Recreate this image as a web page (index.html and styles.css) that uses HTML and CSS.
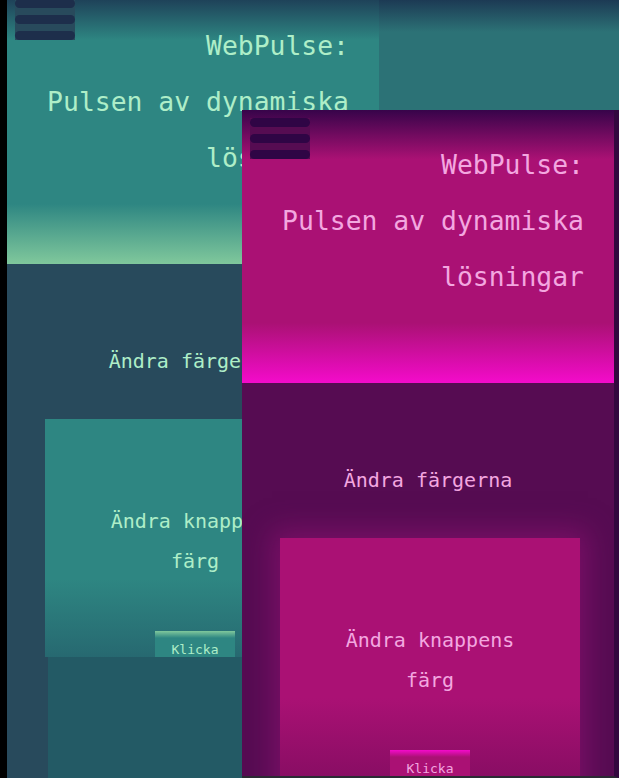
FILE: index.html
```html
<!DOCTYPE html>
<html lang="sv">
<head>
<meta charset="utf-8">
<title>WebPulse</title>
<link rel="stylesheet" href="styles.css">
</head>
<body>
<div class="desktop">
  <div class="backdrop">
    <div class="bd-head"></div>
    <div class="bd-body"><div class="bd-panel"></div></div>
  </div>

  <section class="window theme-teal win-a">
    <header class="hero">
      <div class="burger"><span></span><span></span><span></span></div>
      <h1 class="title"><span>WebPulse:</span><span>Pulsen av dynamiska</span><span>lösningar</span></h1>
    </header>
    <main class="content">
      <h2 class="subtitle">Ändra färgerna</h2>
      <div class="card">
        <p class="card-text">Ändra knappens färg</p>
        <button class="btn">Klicka</button>
      </div>
    </main>
  </section>

  <section class="window theme-magenta win-b">
    <header class="hero">
      <div class="burger"><span></span><span></span><span></span></div>
      <h1 class="title"><span>WebPulse:</span><span>Pulsen av dynamiska</span><span>lösningar</span></h1>
    </header>
    <main class="content">
      <h2 class="subtitle">Ändra färgerna</h2>
      <div class="card">
        <p class="card-text">Ändra knappens färg</p>
        <button class="btn">Klicka</button>
      </div>
    </main>
  </section>
</div>
</body>
</html>
```
FILE: styles.css
```css
* { box-sizing: border-box; }

html, body {
  margin: 0;
  padding: 0;
  background: #000;
}

body {
  font-family: "DejaVu Sans Mono", "Liberation Mono", monospace;
}

.desktop {
  position: relative;
  width: 619px;
  height: 778px;
  overflow: hidden;
  background: #000;
}

/* background page */
.backdrop {
  margin-left: 7px;
  height: 778px;
  display: flex;
  flex-direction: column;
}
.bd-head {
  height: 300px;
  background: linear-gradient(#1c3a54 0, #2c7276 32px, #2c7276 100%);
}
.bd-body {
  flex: 1;
  display: flex;
  padding-left: 41px;
  background: #284a5c;
}
.bd-panel {
  flex: 1;
  background: #235a65;
}

/* windows */
.window {
  position: absolute;
  width: 372px;
  height: 666px;
  overflow: hidden;
  background: var(--body);
}
.win-a { left: 7px; top: -9px; }
.win-b {
  left: 242px;
  top: 110px;
  width: 377px;
  height: 668px;
  border-right: 5px solid #33083f;
  border-bottom: 2px solid #2b2a33;
}

.theme-teal {
  --dark: #1b3350;
  --mid: #2e8682;
  --light: #80c89c;
  --body: #284a5c;
  --text: #aeeec8;
  --bar: #1d2e4b;
  --card-end: #1f4a5e;
  --glow: none;
}
.theme-magenta {
  --dark: #37044a;
  --mid: #aa1174;
  --light: #f40bcb;
  --body: #560c52;
  --text: #f3a7e0;
  --bar: #2f0545;
  --card-end: #660953;
  --glow: 0 0 26px 8px rgba(150, 18, 118, 0.55);
}

.hero {
  display: grid;
  height: 273px;
  background: linear-gradient(var(--dark) 0%, var(--mid) 18%, var(--mid) 78%, var(--light) 100%);
}
.hero > * { grid-area: 1 / 1; }

.burger {
  justify-self: start;
  align-self: start;
  margin: 8px 0 0 8px;
  width: 60px;
  display: flex;
  flex-direction: column;
  gap: 7px;
  background: var(--body);
}
.burger span {
  display: block;
  height: 9px;
  border-radius: 4.5px;
  background: var(--bar);
}

.title {
  margin: 27px 30px 0 0;
  align-self: start;
  text-align: right;
  font-size: 26.4px;
  line-height: 56px;
  font-weight: normal;
  color: var(--text);
}
.title span { display: block; }

.content {
  padding-top: 77px;
}
.subtitle {
  margin: 0 0 38px;
  text-align: center;
  font-size: 20px;
  line-height: 40px;
  font-weight: normal;
  color: var(--text);
}

.card {
  width: 300px;
  height: 320px;
  margin-left: 38px;
  padding: 82px 40px 0;
  text-align: center;
  background: linear-gradient(var(--mid) 0, var(--mid) 160px, var(--card-end) 320px);
  box-shadow: var(--glow);
}
.card-text {
  margin: 0;
  font-size: 20px;
  line-height: 40px;
  color: var(--text);
}
.btn {
  display: block;
  margin: 50px auto 0;
  width: 80px;
  height: 36px;
  padding: 0;
  border: none;
  font-family: "DejaVu Sans Mono", "Liberation Mono", monospace;
  font-size: 13px;
  color: var(--text);
  background: linear-gradient(var(--light) 0, var(--mid) 7px, var(--mid) 100%);
}
```
